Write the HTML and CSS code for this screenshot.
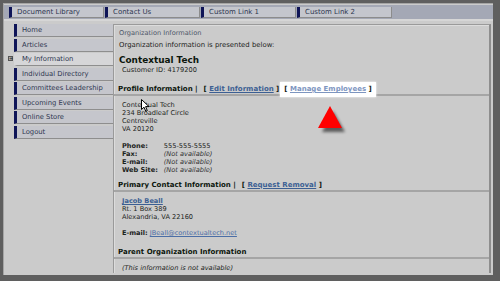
FILE: index.html
```html
<!DOCTYPE html>
<html lang="en">
<head>
  <meta charset="UTF-8">
  <title>Organization Information</title>
  <link rel="stylesheet" href="styles.css">
</head>
<body>
  <div class="screen">
    <div class="topnav">
      <a class="tab">Document Library</a>
      <a class="tab">Contact Us</a>
      <a class="tab">Custom Link 1</a>
      <a class="tab">Custom Link 2</a>
    </div>

    <div class="layout">
      <ul class="sidenav">
        <li>Home</li>
        <li>Articles</li>
        <li class="current"><span class="plus">+</span>My Information</li>
        <li>Individual Directory</li>
        <li>Committees Leadership</li>
        <li>Upcoming Events</li>
        <li>Online Store</li>
        <li>Logout</li>
      </ul>

      <div class="panel">
        <div class="intro">
          <div class="crumb">Organization Information</div>
          <p>Organization information is presented below:</p>
          <h1>Contextual Tech</h1>
          <div class="cid">Customer ID: 4179200</div>
        </div>

        <div class="section-head">
          Profile Information |
          <span class="bracket">[ <a>Edit Information</a> ]</span>
          <span class="highlight">[ <a class="pale">Manage Employees</a> ]</span>
        </div>
        <div class="section-body">
          <div class="address">
            Contextual Tech<br>
            234 Broadleaf Circle<br>
            Centreville<br>
            VA 20120
          </div>
          <table class="details">
            <tr><th>Phone:</th><td>555-555-5555</td></tr>
            <tr><th>Fax:</th><td><em>(Not available)</em></td></tr>
            <tr><th>E-mail:</th><td><em>(Not available)</em></td></tr>
            <tr><th>Web Site:</th><td><em>(Not available)</em></td></tr>
          </table>
        </div>

        <div class="section-head">
          Primary Contact Information |
          <span class="bracket">[ <a>Request Removal</a> ]</span>
        </div>
        <div class="section-body">
          <div class="address">
            <a class="name">Jacob Beall</a><br>
            Rt. 1 Box 389<br>
            Alexandria, VA 22160
          </div>
          <div class="email"><b>E-mail:</b> <a class="mail">JBeall@contextualtech.net</a></div>
        </div>

        <div class="section-head last">Parent Organization Information</div>
        <div class="section-body">
          <em>(This information is not available)</em>
        </div>
      </div>
    </div>

    <!-- callout arrow and mouse pointer drawn over the page -->
    <svg class="callout" width="40" height="36" viewBox="0 0 40 36">
      <defs>
        <filter id="soft" x="-30%" y="-30%" width="160%" height="160%">
          <feGaussianBlur stdDeviation="1.6"/>
        </filter>
      </defs>
      <polygon points="15,4 4,25 27,25" fill="#000" opacity="0.55" filter="url(#soft)" transform="translate(3,3)"/>
      <polygon points="15,2 3,24 27,24" fill="#f00"/>
    </svg>
    <svg class="pointer" width="9" height="13" viewBox="0 0 9 13">
      <path d="M0.5 0.5 L0.5 10.5 L3 8.2 L4.8 12.3 L6.3 11.6 L4.6 7.6 L8 7.6 Z" fill="#fff" stroke="#000" stroke-width="1"/>
    </svg>
  </div>
</body>
</html>
```

FILE: styles.css
```css
* { box-sizing: border-box; }
html, body {
  margin: 0;
  padding: 0;
  background: #5f5f5f;
}
body {
  font-family: "DejaVu Sans", Verdana, sans-serif;
  font-size: 6.6px;
  color: #1c241c;
}
.screen {
  position: relative;
  width: 490px;
  height: 272px;
  margin: 3px 7px 0 3px;
  background: #cbcbcb;
  border-left: 1px solid #a5a5a5;
  border-top: 1px solid #a5a5a5;
  overflow: hidden;
}
.topnav {
  display: flex;
  height: 16px;
  margin-top: 1px;
  padding: 2px 0 1px 5px;
  background: #a4a8b5;
  border-bottom: 2px solid #d6d6d6;
}
.tab {
  display: flex;
  align-items: center;
  width: 95px;
  margin-right: 1px;
  padding-left: 5px;
  background: #c4c6cd;
  border-left: 3px solid #0f1558;
  border-right: 1px solid #8c8c8c;
  border-bottom: 1px solid #8c8c8c;
  color: #2e3650;
  font-size: 7px;
}
.layout {
  display: flex;
  padding-top: 3px;
}
.sidenav {
  list-style: none;
  margin: 0;
  padding: 0 0 0 3px;
  width: 109px;
}
.sidenav li {
  position: relative;
  height: 13px;
  margin: 0 0 1.5px 7px;
  padding-left: 5px;
  display: flex;
  align-items: center;
  background: #c5c6cc;
  border-left: 3px solid #0f1558;
  border-bottom: 1.5px solid #8e8e8e;
  color: #2e3650;
  font-size: 6.8px;
}
.sidenav li.current {
  background: #d6d6d8;
  border-left: 3px solid #d6d6d8;
}
.plus {
  position: absolute;
  left: -9px;
  top: 3px;
  width: 5px;
  height: 5px;
  border: 1px solid #555;
  background: #aaa;
  font-size: 5px;
  line-height: 3px;
  text-align: center;
  color: #222;
}
.panel {
  flex: 1;
  height: 249px;
  margin-right: 2px;
  border-left: 1px solid #9a9a9a;
  border-top: 1px solid #9a9a9a;
  border-right: 2px solid #8e8e8e;
  box-shadow: inset 1px 1px 0 #dcdcdc;
}
.intro {
  padding: 4px 0 4px 5px;
}
.crumb {
  color: #4c5668;
  line-height: 9px;
}
.intro p {
  margin: 3px 0 0;
  line-height: 9px;
  font-size: 6.9px;
}
h1 {
  margin: 5px 0 0;
  font-size: 8.9px;
  line-height: 11px;
  color: #0c160c;
}
.cid {
  padding-left: 3px;
  line-height: 8px;
}
.section-head {
  display: flex;
  align-items: center;
  gap: 6px;
  height: 13px;
  margin-top: 5px;
  padding-left: 4px;
  font-weight: bold;
  font-size: 7px;
  color: #0c160c;
  border-bottom: 2px solid #a5a5a5;
}
.section-head.last {
  margin-top: 9px;
}
.bracket a, .highlight a {
  color: #3c5f93;
  text-decoration: underline;
}
.highlight {
  padding: 3px 4px 4px;
  margin: 0 0 -2px -5px;
  background: #fff;
  box-shadow: 0 0 2px #fff;
}
.highlight a.pale {
  color: #7d95bf;
}
.section-body {
  padding: 5px 0 0 8px;
  line-height: 8px;
}
.section-body em {
  font-style: italic;
}
.details {
  margin-top: 9px;
  border-collapse: collapse;
  font-size: 6.6px;
}
.details th {
  text-align: left;
  padding: 0 6px 0 0;
  line-height: 8px;
  font-weight: bold;
}
.details td {
  padding: 0;
  line-height: 8px;
}
.details em {
  color: #333;
}
a.name {
  color: #3c5f93;
  font-weight: bold;
  text-decoration: underline;
}
.email {
  margin-top: 8px;
}
a.mail {
  color: #4b6ea6;
  text-decoration: underline;
}
.callout {
  position: absolute;
  left: 311px;
  top: 100px;
}
.pointer {
  position: absolute;
  left: 137px;
  top: 95px;
}
```
